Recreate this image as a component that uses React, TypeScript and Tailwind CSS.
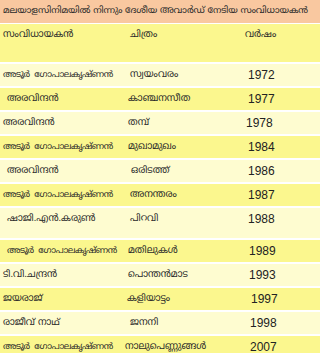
import React from 'react';

type Row = { director: string; film: string; year: string; dx?: string; fx?: string; yx?: string; tall?: boolean; shade: 'light' | 'dark' };

const adoor = 'അടൂർ  ഗോപാലകൃഷ്ണൻ';

const rows: Row[] = [
  { director: adoor, film: 'സ്വയംവരം', year: '1972', shade: 'light' },
  { director: 'അരവിന്ദൻ', film: 'കാഞ്ചനസീത', year: '1977', dx: 'pl-[7px]', fx: 'pl-[4px]', shade: 'dark' },
  { director: 'അരവിന്ദൻ', film: 'തമ്പ്', year: '1978', fx: 'pl-[4px]', yx: 'pl-[2px]', shade: 'light' },
  { director: adoor, film: 'മുഖാമുഖം', year: '1984', fx: 'pl-[4px]', shade: 'dark' },
  { director: 'അരവിന്ദൻ', film: 'ഒരിടത്ത്', year: '1986', dx: 'pl-[7px]', fx: 'pl-[7px]', shade: 'light' },
  { director: adoor, film: 'അനന്തരം', year: '1987', shade: 'dark' },
  { director: 'ഷാജി.എൻ.കരുൺ', film: 'പിറവി', year: '1988', dx: 'pl-[7px]', tall: true, shade: 'light' },
  { director: adoor, film: 'മതിലുകൾ', year: '1989', dx: 'pl-[7px]', fx: 'pl-[4px]', yx: 'pl-[5px]', shade: 'dark' },
  { director: 'ടി.വി.ചന്ദ്രൻ', film: 'പൊന്തൻമാട', year: '1993', fx: 'pl-[4px]', yx: 'pl-[5px]', shade: 'light' },
  { director: 'ജയരാജ്', film: 'കളിയാട്ടം', year: '1997', fx: 'pl-[3px]', yx: 'pl-[7px]', shade: 'dark' },
  { director: 'രാജീവ് നാഥ്', film: 'ജനനി', year: '1998', yx: 'pl-[6px]', shade: 'light' },
  { director: adoor, film: 'നാലുപെണ്ണുങ്ങൾ', year: '2007', fx: 'pl-[1px]', yx: 'pl-[6px]', shade: 'dark' },
];

const ml = "font-['Noto_Sans_Malayalam','Noto_Sans','DejaVu_Sans',sans-serif]";

const App: React.FC = () => {
  return (
    <div className="w-[320px] h-[353px] overflow-hidden bg-white text-[#2a2a2a] flex flex-col gap-[1px]">
      <div className={`h-[23px] shrink-0 bg-[#f9c8a0] flex items-center pl-[3px] text-[9.2px] tracking-[-0.1px] whitespace-nowrap ${ml}`}>
        മലയാളസിനിമയിൽ നിന്നും ദേശീയ അവാർഡ് നേടിയ സംവിധായകൻ
      </div>
      <div className="flex flex-col gap-[2px]">
        <div className={`grid grid-cols-[124px_120px_76px] h-[38px] shrink-0 bg-[#fbf78e] text-[9.5px] leading-[22px] ${ml}`}>
          <div className="pl-[3px]">സംവിധായകൻ</div>
          <div className="pl-[6px]">ചിത്രം</div>
          <div className="pl-[1px]">വർഷം</div>
        </div>
        {rows.map((r) => (
          <div
            key={r.year}
            className={`grid grid-cols-[124px_120px_76px] shrink-0 items-start leading-[22px] ${r.tall ? 'h-[30px]' : 'h-[22px]'} ${r.shade === 'dark' ? 'bg-[#fbf78e]' : 'bg-[#fefcd0]'}`}
          >
            <div className={`whitespace-pre overflow-hidden ${ml} ${r.director === adoor ? 'text-[9px] tracking-[-0.5px]' : 'text-[9.5px]'} ${r.dx ?? 'pl-[3px]'}`}>{r.director}</div>
            <div className={`whitespace-pre text-[9.5px] ${ml} ${r.fx ?? 'pl-[6px]'}`}>{r.film}</div>
            <div className={`whitespace-pre text-[12px] text-[#222] font-['Liberation_Sans',Arial,sans-serif] ${r.yx ?? 'pl-[4px]'}`}>{r.year}</div>
          </div>
        ))}
      </div>
    </div>
  );
};

export default App;
